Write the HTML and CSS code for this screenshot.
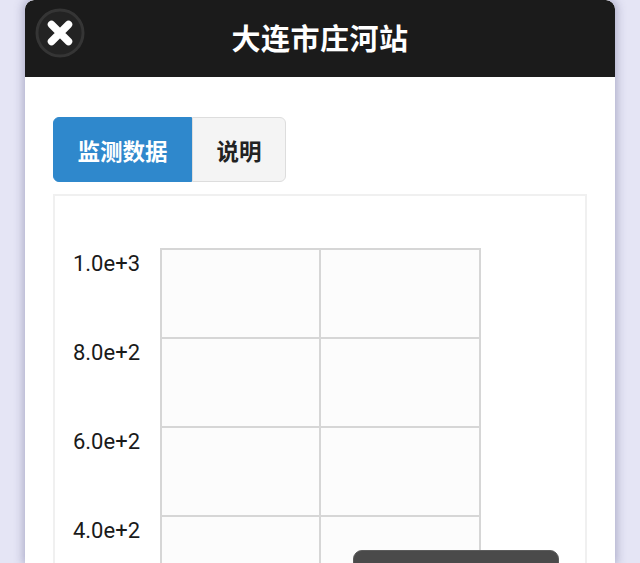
FILE: index.html
```html
<!DOCTYPE html>
<html lang="zh">
<head>
<meta charset="utf-8">
<title>大连市庄河站</title>
<link rel="stylesheet" href="styles.css">
</head>
<body>
<div class="modal">
  <header class="head">
    <button class="close" aria-label="关闭">
      <svg width="50" height="50" viewBox="0 0 50 50">
        <circle cx="25" cy="25" r="23" fill="#232323" stroke="#353535" stroke-width="3"/>
        <path d="M16.5 16.5 L33.5 33.5 M33.5 16.5 L16.5 33.5" stroke="#ffffff" stroke-width="7.5" stroke-linecap="round"/>
      </svg>
    </button>
    <h1 class="title">大连市庄河站</h1>
    <span class="spacer"></span>
  </header>
  <main class="content">
    <div class="tabs">
      <div class="tab active">监测数据</div>
      <div class="tab">说明</div>
    </div>
    <section class="panel">
      <div class="chart">
        <div class="axis">
          <div class="tick">1.0e+3</div>
          <div class="tick">8.0e+2</div>
          <div class="tick">6.0e+2</div>
          <div class="tick">4.0e+2</div>
        </div>
        <div class="grid">
          <div class="cell"></div><div class="cell"></div>
          <div class="cell"></div><div class="cell"></div>
          <div class="cell"></div><div class="cell"></div>
          <div class="cell"></div><div class="cell"></div>
        </div>
      </div>
      <div class="tooltip"></div>
    </section>
  </main>
</div>
</body>
</html>
```
FILE: styles.css
```css
html, body {
  margin: 0;
  padding: 0;
  height: 563px;
  overflow: hidden;
}
body {
  background: #e5e5f5;
  font-family: Roboto, "Noto Sans CJK SC", sans-serif;
}
.modal {
  width: 590px;
  margin-left: 25px;
  height: 563px;
  background: #ffffff;
  border-radius: 9px 9px 0 0;
  box-shadow: 0 0 10px 2px rgba(70, 70, 120, 0.35);
  display: flex;
  flex-direction: column;
  overflow: hidden;
}
.head {
  height: 77px;
  background: #1b1b1b;
  border-radius: 9px 9px 0 0;
  display: grid;
  grid-template-columns: 1fr auto 1fr;
  align-items: center;
  flex-shrink: 0;
}
.close {
  justify-self: start;
  align-self: start;
  margin: 8px 0 0 10px;
  padding: 0;
  border: 0;
  background: none;
  width: 50px;
  height: 50px;
  display: block;
}
.close svg { display: block; }
.title {
  margin: 0 0 4px 0;
  color: #ffffff;
  font-family: "Noto Sans CJK SC", sans-serif;
  font-weight: 700;
  font-size: 29px;
  line-height: 36px;
  letter-spacing: 0.5px;
}
.content {
  padding: 40px 28px 0 28px;
  display: flex;
  flex-direction: column;
  gap: 12px;
  min-height: 0;
}
.tabs {
  display: flex;
}
.tab {
  height: 63px;
  display: flex;
  align-items: center;
  justify-content: center;
  font-family: "Noto Sans CJK SC", sans-serif;
  font-weight: 700;
  font-size: 22.5px;
  color: #222222;
  background: #f4f4f4;
  border: 1px solid #dddddd;
  width: 92px;
  border-radius: 0 6px 6px 0;
}
.tab.active {
  width: 137px;
  background: #2f88cc;
  border-color: #2f88cc;
  color: #ffffff;
  font-weight: 700;
  border-radius: 6px 0 0 6px;
}
.panel {
  position: relative;
  border: 2px solid #f0f0f0;
  border-bottom: 0;
  height: 367px;
  overflow: hidden;
}
.chart {
  display: flex;
  padding-top: 52px;
}
.axis {
  width: 85px;
  display: flex;
  flex-direction: column;
  align-items: flex-end;
}
.tick {
  height: 89px;
  flex-shrink: 0;
  box-sizing: border-box;
  padding-top: 3px;
  font-size: 22px;
  line-height: 26px;
  color: #1a1a1a;
}
.grid {
  margin-left: 20px;
  display: grid;
  grid-template-columns: 159px 160px;
  grid-auto-rows: 89px;
  border-top: 2px solid #d6d6d6;
  border-left: 2px solid #d6d6d6;
}
.cell {
  border-right: 2px solid #d6d6d6;
  border-bottom: 2px solid #d6d6d6;
  background: #fcfcfc;
}
.tooltip {
  position: absolute;
  left: 298px;
  top: 354px;
  width: 204px;
  height: 40px;
  background: #4a4a4a;
  border: 1px solid #5c5c5c;
  border-radius: 9px;
}
```
